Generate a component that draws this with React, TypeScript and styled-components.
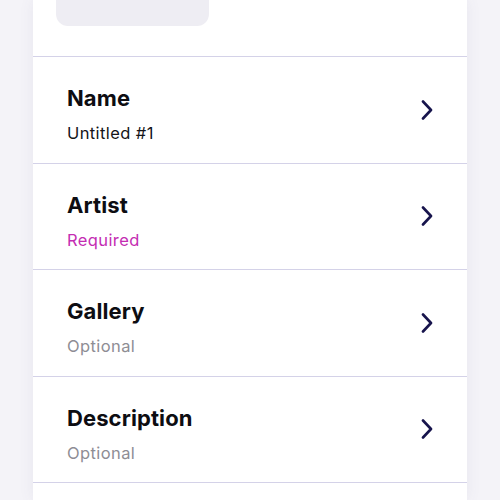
import React from "react";
import styled, { createGlobalStyle } from "styled-components";

const Global = createGlobalStyle`
  html, body { margin: 0; padding: 0; background: #f4f3f8; }
  body { font-family: "Inter", "Liberation Sans", sans-serif; }
`;

const Page = styled.div`
  width: 500px;
  height: 500px;
  overflow: hidden;
  display: flex;
  justify-content: center;
  background: #f4f3f8;
`;

const Panel = styled.div`
  width: 434px;
  background: #ffffff;
  box-shadow: 0 0 14px rgba(90, 85, 130, 0.08);
  display: flex;
  flex-direction: column;
`;

const Header = styled.div`
  height: 57px;
  padding: 0 23px;
  border-bottom: 1px solid #d4d2e8;
  box-sizing: border-box;
  flex-shrink: 0;
`;

const Thumb = styled.div`
  width: 153px;
  height: 26px;
  background: #eeedf3;
  border-radius: 0 0 12px 12px;
`;

const Row = styled.div`
  height: 106.5px;
  box-sizing: border-box;
  border-bottom: 1px solid #d4d2e8;
  display: flex;
  align-items: center;
  justify-content: space-between;
  padding: 0 34px 0 34px;
  flex-shrink: 0;
`;

const Texts = styled.div`
  align-self: flex-start;
  display: flex;
  flex-direction: column;
  padding-top: 28px;
`;

const Title = styled.div`
  font-size: 22px;
  font-weight: 700;
  color: #0d0d12;
  line-height: 26px;
  letter-spacing: 0.1px;
`;

type Tone = "value" | "required" | "optional";

const Sub = styled.div<{ $tone: Tone }>`
  margin-top: 13px;
  font-size: 16.5px;
  line-height: 18px;
  font-weight: 400;
  letter-spacing: 0.4px;
  color: ${(p) =>
    p.$tone === "required" ? "#c42db2" : p.$tone === "optional" ? "#8e8d94" : "#141418"};
`;

const Chevron = () => (
  <svg width="12" height="20" viewBox="0 0 12 20" fill="none">
    <path d="M2 1.5 L10 10 L2 18.5" stroke="#17144c" strokeWidth="2.6" strokeLinecap="round" strokeLinejoin="round" />
  </svg>
);

const rows: { title: string; sub: string; tone: Tone }[] = [
  { title: "Name", sub: "Untitled #1", tone: "value" },
  { title: "Artist", sub: "Required", tone: "required" },
  { title: "Gallery", sub: "Optional", tone: "optional" },
  { title: "Description", sub: "Optional", tone: "optional" },
];

export default function App() {
  return (
    <>
      <Global />
      <Page>
        <Panel>
          <Header>
            <Thumb />
          </Header>
          {rows.map((r) => (
            <Row key={r.title}>
              <Texts>
                <Title>{r.title}</Title>
                <Sub $tone={r.tone}>{r.sub}</Sub>
              </Texts>
              <Chevron />
            </Row>
          ))}
        </Panel>
      </Page>
    </>
  );
}
